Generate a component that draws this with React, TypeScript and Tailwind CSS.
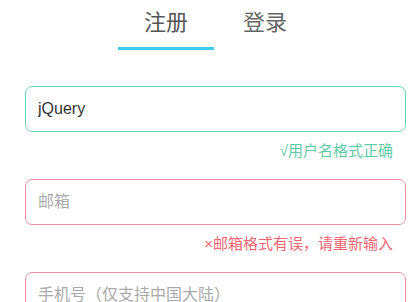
import { useState } from "react";

type Field = {
  id: string;
  placeholder: string;
  value: string;
  status: "ok" | "error" | "none";
  hint?: string;
};

const fields: Field[] = [
  { id: "user", placeholder: "用户名", value: "jQuery", status: "ok", hint: "√用户名格式正确" },
  { id: "mail", placeholder: "邮箱", value: "", status: "error", hint: "×邮箱格式有误，请重新输入" },
  { id: "phone", placeholder: "手机号（仅支持中国大陆）", value: "", status: "error" },
];

export default function App() {
  const [tab, setTab] = useState<"reg" | "login">("reg");

  return (
    <div
      className="h-[302px] w-[412px] overflow-hidden bg-white pl-[25px] pr-[6px]"
      style={{ fontFamily: '"Liberation Sans", "Noto Sans CJK SC", sans-serif' }}
    >
      <div className="flex justify-center gap-[3px]">
        {[
          { id: "reg" as const, label: "注册" },
          { id: "login" as const, label: "登录" },
        ].map((t) => (
          <button
            key={t.id}
            onClick={() => setTab(t.id)}
            className={`h-[50px] w-[96px] border-b-[3px] pt-[8px] pb-[9px] text-[22px] leading-[30px] ${
              tab === t.id ? "border-[#3fcaf4] text-[#555]" : "border-transparent text-[#666]"
            }`}
          >
            {t.label}
          </button>
        ))}
      </div>

      <form className="mt-[36px] flex flex-col">
        {fields.map((f) => (
          <div key={f.id}>
            <input
              defaultValue={f.value}
              placeholder={f.placeholder}
              className={`h-[46px] w-full rounded-[7px] border-[1.5px] bg-white px-[12px] text-[16px] text-[#333] outline-none placeholder:text-[#aaa] ${
                f.status === "ok" ? "border-[#6dd6b5]" : "border-[#f0909d]"
              }`}
            />
            <div className="h-[47px] pt-[7px] pr-[13px] text-right">
              {f.hint ? (
                <span
                  className={`text-[15px] leading-[20px] ${
                    f.status === "ok" ? "text-[#5fcba6]" : "text-[#f26572]"
                  }`}
                >
                  {f.hint}
                </span>
              ) : null}
            </div>
          </div>
        ))}
      </form>
    </div>
  );
}
